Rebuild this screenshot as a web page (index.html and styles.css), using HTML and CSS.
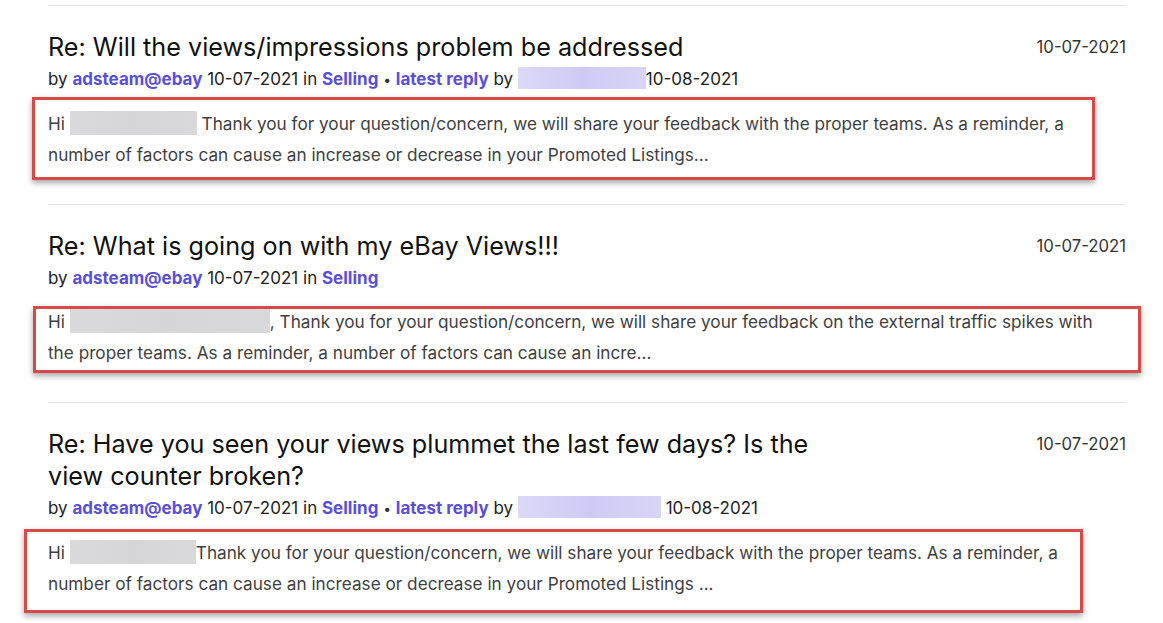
FILE: index.html
```html
<!DOCTYPE html>
<html lang="en">
<head>
<meta charset="utf-8">
<title>Search results</title>
<link rel="stylesheet" href="styles.css">
</head>
<body>
<main class="results">
  <article class="item">
    <div class="item-head">
      <h2 class="title">Re: Will the views/impressions problem be addressed</h2>
      <span class="date">10-07-2021</span>
    </div>
    <p class="meta">by <a class="link" href="#">adsteam@ebay</a> 10-07-2021 in <a class="link" href="#">Selling</a> <span class="dot">•</span> <a class="link" href="#">latest reply</a> by <span class="redact redact-purple redact-a"></span>10-08-2021</p>
    <div class="mark mark-1">
      <p class="snippet">Hi <span class="redact redact-grey redact-b"></span> Thank you for your question/concern, we will share your feedback with the proper teams. As a reminder, a number of factors can cause an increase or decrease in your Promoted Listings...</p>
    </div>
  </article>
  <article class="item">
    <div class="item-head">
      <h2 class="title">Re: What is going on with my eBay Views!!!</h2>
      <span class="date">10-07-2021</span>
    </div>
    <p class="meta">by <a class="link" href="#">adsteam@ebay</a> 10-07-2021 in <a class="link" href="#">Selling</a></p>
    <div class="mark mark-2">
      <p class="snippet">Hi <span class="redact redact-grey redact-c"></span>, Thank you for your question/concern, we will share your feedback on the external traffic spikes with the proper teams. As a reminder, a number of factors can cause an incre...</p>
    </div>
  </article>
  <article class="item">
    <div class="item-head">
      <h2 class="title">Re: Have you seen your views plummet the last few days? Is the view counter broken?</h2>
      <span class="date">10-07-2021</span>
    </div>
    <p class="meta">by <a class="link" href="#">adsteam@ebay</a> 10-07-2021 in <a class="link" href="#">Selling</a> <span class="dot">•</span> <a class="link" href="#">latest reply</a> by <span class="redact redact-purple redact-d"></span> 10-08-2021</p>
    <div class="mark mark-3">
      <p class="snippet">Hi <span class="redact redact-grey redact-e"></span>Thank you for your question/concern, we will share your feedback with the proper teams. As a reminder, a number of factors can cause an increase or decrease in your Promoted Listings ...</p>
    </div>
  </article>
</main>
</body>
</html>
```

FILE: styles.css
```css
* { box-sizing: border-box; }

html, body {
  margin: 0;
  background: #ffffff;
}

body {
  font-family: Inter, "Open Sans", "Liberation Sans", sans-serif;
  color: #111820;
}

.results {
  padding: 5px 37px 0 48px;
}

.item {
  border-top: 1px solid #e5e5e5;
  padding: 25px 0 34px;
}

.item-head {
  display: flex;
  justify-content: space-between;
  align-items: flex-start;
  gap: 20px;
}

.title {
  margin: 0;
  max-width: 790px;
  font-size: 25.2px;
  line-height: 32px;
  font-weight: 400;
  color: #111111;
}

.date {
  font-size: 16.7px;
  line-height: 32px;
  color: #333333;
  white-space: nowrap;
}

.meta {
  margin: 4px 0 0;
  font-size: 17px;
  line-height: 24px;
  color: #222222;
}

.link {
  color: #5a4fd6;
  font-weight: 700;
  text-decoration: none;
}

.dot {
  color: #333333;
  font-size: 14px;
}

.mark {
  position: relative;
  margin-top: 16px;
}

.snippet {
  margin: 0;
  max-width: 1060px;
  font-size: 17.2px;
  line-height: 31px;
  color: #3f3f3f;
}

.redact {
  display: inline-block;
  vertical-align: middle;
  height: 24px;
  margin-top: -4px;
}

.redact-grey {
  background: linear-gradient(90deg, #dadadd, #d6d6d8 50%, #d9d9db);
}

.redact-purple {
  background: linear-gradient(90deg, #dcd9f8, #cfcaf4 50%, #d9d5f7);
  height: 22px;
}

.redact-a { width: 128px; }
.redact-b { width: 127px; }
.redact-c { width: 200px; }
.redact-d { width: 143px; }
.redact-e { width: 126px; }

/* red annotation boxes drawn over the snippets */
.mark::after {
  content: "";
  position: absolute;
  border: 3px solid #d84a4a;
  box-shadow: 0 3px 6px rgba(0, 0, 0, 0.35);
  pointer-events: none;
}

.mark-1::after { top: -11px; bottom: -10px; left: -16px; right: 31px; }
.mark-2::after { top: 0; bottom: -5px; left: -15px; right: -15px; }
.mark-3::after { top: -8px; bottom: -14px; left: -24px; right: 43px; }
```
